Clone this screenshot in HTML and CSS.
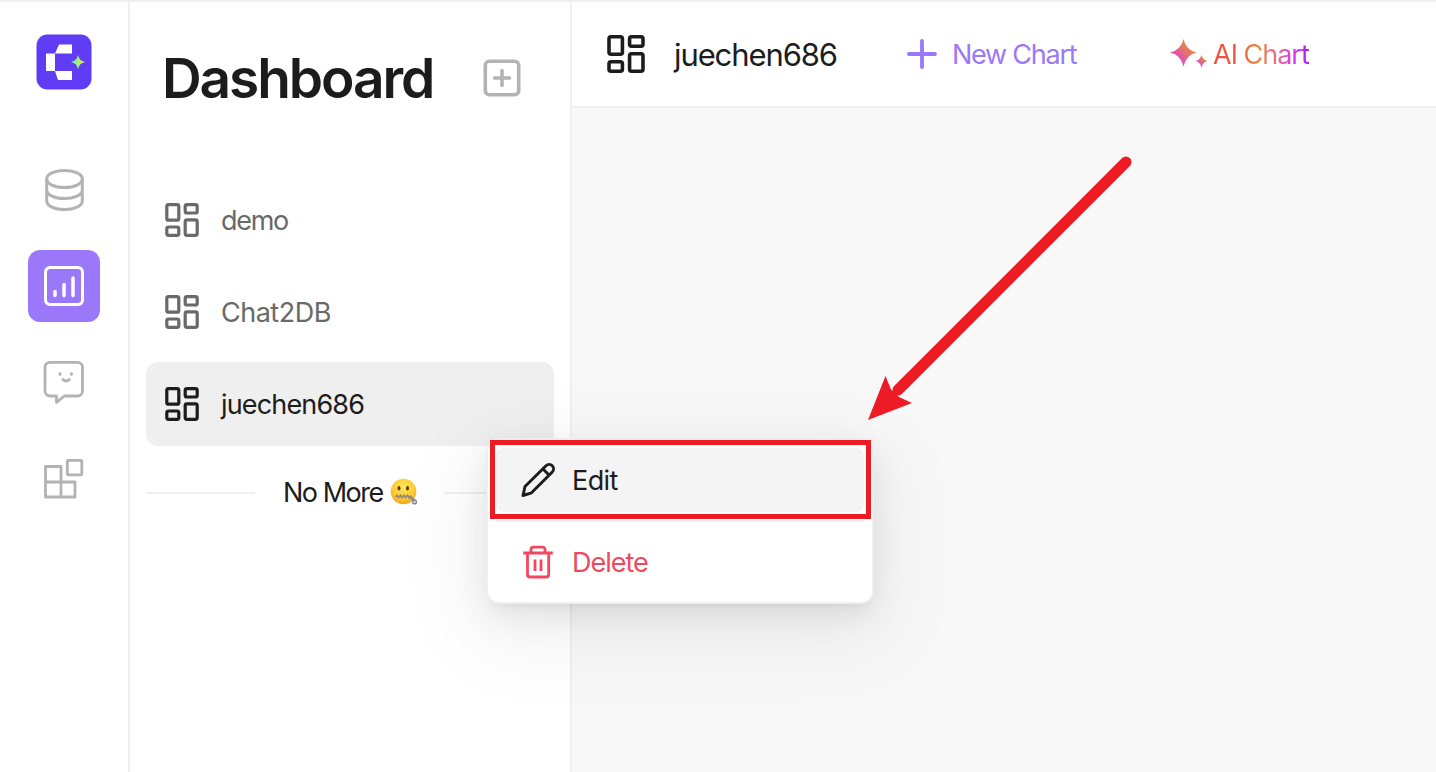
FILE: index.html
```html
<!DOCTYPE html>
<html lang="en">
<head>
<meta charset="utf-8">
<title>Dashboard</title>
<link rel="stylesheet" href="styles.css">
</head>
<body>
<svg class="defs" width="0" height="0">
  <defs>
    <symbol id="grid" viewBox="0 0 34 34">
      <g fill="none" stroke="currentColor" stroke-width="3.2">
        <rect x="1.8" y="1.6" width="12" height="15.6" rx="1.8"/>
        <rect x="20.2" y="1.6" width="12" height="8.4" rx="1.8"/>
        <rect x="1.8" y="24" width="12" height="8.4" rx="1.8"/>
        <rect x="20.2" y="16.8" width="12" height="15.6" rx="1.8"/>
      </g>
    </symbol>
    <linearGradient id="spark" x1="1" y1="0" x2="0" y2="1"><stop offset=".25" stop-color="#e8893c"/><stop offset=".7" stop-color="#dd4fbd"/></linearGradient>
    <linearGradient id="lime" x1="0" y1="0" x2="1" y2="0"><stop offset="0" stop-color="#5cf0c0"/><stop offset="1" stop-color="#f0e83a"/></linearGradient>
    <radialGradient id="face" cx=".5" cy=".35" r=".65"><stop offset="0" stop-color="#ffe65a"/><stop offset=".65" stop-color="#fecb35"/><stop offset="1" stop-color="#f3a01e"/></radialGradient>
  </defs>
</svg>
<div class="app">
  <nav class="rail">
    <svg class="logo" viewBox="0 0 56 56">
      <rect x=".5" y=".5" width="55" height="55" rx="11" fill="#613cf5"/>
      <path d="M10 19.500h9v17.500h-9zM23 10.500h13v9H19zM19 37h17v9H22z" fill="#fff"/>
      <path d="M42 21q1.300 5.800 7 7-5.700 1.200-7 7-1.300-5.800-7-7 5.700-1.200 7-7z" fill="url(#lime)"/>
    </svg>
    <div class="tools">
      <div class="tool"><svg width="44" height="48" viewBox="0 0 44 48" fill="none" stroke="#b3b3b3" stroke-width="3"><ellipse cx="22.500" cy="13" rx="17.800" ry="8.600"/><path d="M4.700 13v22c0 4.800 8 8.600 17.800 8.600s17.800-3.800 17.800-8.600V13M4.700 24c0 4.800 8 8.600 17.800 8.600s17.800-3.800 17.800-8.600"/></svg></div>
      <div class="tool active"><svg width="44" height="44" viewBox="0 0 44 44" fill="none" stroke="#fff" stroke-width="3" stroke-linecap="round"><rect x="3.500" y="3.500" width="37" height="37" rx="4.500"/><path d="M13 27.500v4M22 20.500v11M31 14v17.500" stroke-width="3.500"/></svg></div>
      <div class="tool"><svg width="44" height="48" viewBox="1 1 44 48" fill="none" stroke="#b3b3b3" stroke-width="2.800" stroke-linecap="round" stroke-linejoin="round"><path d="M9 5.300h27.500a5 5 0 0 1 5 5V34a5 5 0 0 1-5 5H23.500l-8 6.300V39H9a5 5 0 0 1-5-5V10.300a5 5 0 0 1 5-5z"/><path d="M19 16.600v1M30.500 16.600v1M22 22.400q3.200 3.200 6.400 0"/></svg></div>
      <div class="tool"><svg width="44" height="44" viewBox="2 0 44 44" fill="none" stroke="#b3b3b3" stroke-width="2.800" stroke-linejoin="round"><path d="M5.500 10.500h15.500v15.500h14v15H5.500zM5.500 26H21v15"/><rect x="27.300" y="4.300" width="14.500" height="14.500" rx=".8"/></svg></div>
    </div>
  </nav>
  <aside class="side">
    <div class="side-head">
      <h1 class="title">Dashboard</h1>
      <svg class="add" viewBox="0 0 38 38" fill="none" stroke="#b3b3b3" stroke-width="3.600" stroke-linecap="round"><rect x="2.300" y="2.300" width="33.400" height="33.400" rx="4"/><path d="M19 11.500v15M11.500 19h15"/></svg>
    </div>
    <div class="list">
      <div class="item"><svg class="glyph"><use href="#grid"/></svg><span class="t-demo">demo</span></div>
      <div class="item"><svg class="glyph"><use href="#grid"/></svg><span class="t-chat">Chat2DB</span></div>
      <div class="item selected"><svg class="glyph"><use href="#grid"/></svg><span class="t-jue">juechen686</span></div>
    </div>
    <div class="more">
      <span class="rule"></span>
      <span class="more-text">No More</span>
      <svg class="emoji" viewBox="0 0 28 28">
        <circle cx="13.500" cy="13.500" r="12.800" fill="url(#face)"/>
        <ellipse cx="9" cy="10.300" rx="1.500" ry="2.300" fill="#6a3b08"/><ellipse cx="17.500" cy="10.300" rx="1.500" ry="2.300" fill="#6a3b08"/>
        <path d="M5.500 18.300H21" stroke="#c9b27c" stroke-width="2.500"/>
        <path d="M5.500 19l1.500-2 1.500 3 2-3 1.500 3 2-3 1.500 3 2-3 1.500 3 2-2" fill="none" stroke="#85807a" stroke-width="1.100"/>
        <path d="M20.500 19l4 4" stroke="#8f8f8f" stroke-width="3"/><circle cx="24.500" cy="23.900" r="1.900" fill="#ddd" stroke="#858585" stroke-width="1.300"/>
      </svg>
      <span class="rule"></span>
    </div>
  </aside>
  <main class="main">
    <header class="bar">
      <svg class="bar-grid"><use href="#grid"/></svg>
      <span class="bar-name">juechen686</span>
      <svg class="plus" viewBox="0 0 30 30" stroke="#9b78fa" stroke-width="3.800" stroke-linecap="round"><path d="M15 2v26M2 15h26"/></svg>
      <span class="new">New Chart</span>
      <svg class="sparkles" viewBox="0 0 38 30" fill="url(#spark)"><path d="M13.500 0q2.500 11 13 13.500-10.500 2.500-13 14Q11 16 0 13.500 11 11 13.500 0z"/><path d="M31.500 16q1.300 5 6 6-4.700 1-6 6.500-1.300-5.500-6-6.500 4.700-1 6-6z"/></svg>
      <span class="ai">AI Chart</span>
    </header>
    <section class="canvas"></section>
  </main>
</div>
<div class="menu">
  <div class="option hover">
    <svg width="36" height="36" viewBox="0 0 36 36" fill="none" stroke="#1c1c1c" stroke-width="2.900" stroke-linejoin="round"><path d="M3 33.500l2-9L26 3.800a4.300 4.300 0 0 1 6.300 6.200L11.500 30.800zM23 7l6 6"/></svg>
    <span class="t-edit">Edit</span>
  </div>
  <div class="divider"></div>
  <div class="option danger">
    <svg width="36" height="36" viewBox="0 0 36 36" fill="none" stroke="#ef4960" stroke-width="2.800" stroke-linejoin="round"><path d="M3.300 9h29.500M7.500 9v21.500a2.500 2.500 0 0 0 2.500 2.500h16.200a2.500 2.500 0 0 0 2.500-2.500V9M11 9V5.500A2.300 2.300 0 0 1 13.300 3.200h9.400A2.300 2.300 0 0 1 25 5.500V9M15 15.500V27M21 15.500V27"/></svg>
    <span class="t-delete">Delete</span>
  </div>
</div>
<div class="highlight"></div>
<svg class="arrow" viewBox="0 0 280 280"><path d="M264 12L36 240" stroke="#ed1c24" stroke-width="11" stroke-linecap="round"/><path d="M6 270L23.500 226 29 239.500 37 247 50 253z" fill="#ed1c24"/></svg>
</body>
</html>
```
FILE: styles.css
```css
* { box-sizing: border-box; }
body { margin: 0; width: 1436px; height: 772px; overflow: hidden; font: 27px/36px Inter, sans-serif; color: #1c1c1c; background: #fff; }
svg { display: block; flex: none; }
span, h1 { white-space: nowrap; }
.defs { position: absolute; }
.app { display: flex; height: 772px; border-top: 2px solid #efefef; }
.rail { width: 130px; border-right: 2px solid #efefef; padding-top: 32px; }
.logo { width: 56px; height: 56px; margin-left: 36px; }
.tools { display: flex; flex-direction: column; gap: 24px; margin: 64px 0 0 28px; }
.tool { width: 72px; height: 72px; border-radius: 12px; display: flex; align-items: center; justify-content: center; }
.active { background: #9b78fa; }
.side { width: 442px; border-right: 2px solid #efefef; }
.side-head { display: flex; justify-content: space-between; align-items: center; height: 76px; margin: 38px 49px 0 32px; }
.title { margin: 0; font-size: 55px; line-height: 76px; font-weight: 600; letter-spacing: -2.1px; }
.add { width: 38px; height: 38px; }
.list { display: flex; flex-direction: column; gap: 8px; margin: 62px 16px 0; }
.item { display: flex; align-items: center; gap: 22px; height: 84px; padding-left: 19px; border-radius: 12px; color: #696969; }
.item span, .option span { padding-top: 1px; }
.selected { background: #efefef; color: #1c1c1c; }
.glyph { width: 34px; height: 34px; }
.more { display: flex; align-items: center; margin: 28px 16px 0; height: 38px; }
.rule { width: 109px; height: 2px; background: #efefef; }
.more-text { width: 107px; margin-left: 28px; letter-spacing: -1.5px; }
.emoji { width: 28px; height: 28px; margin: 0 27px 2px 0; }
.main { flex: 1; display: flex; flex-direction: column; }
.bar { height: 106px; display: flex; align-items: center; border-bottom: 2px solid #efefef; padding-left: 35px; }
.bar span { padding-top: 2px; }
.bar-grid { width: 38px; height: 38px; }
.bar-name { font-size: 31px; margin-left: 29px; width: 233px; letter-spacing: -1.1px; }
.plus { width: 30px; height: 30px; }
.new { color: #9b78fa; width: 218px; margin-left: 15px; letter-spacing: -1.25px; }
.sparkles { width: 38px; height: 30px; }
.ai { margin-left: 5px; letter-spacing: -1px; background: linear-gradient(90deg, #f0503f 0%, #ef5940 26%, #e98a42 48%, #e36b9a 68%, #d934ea 84%, #a41cf5 100%); background-clip: text; -webkit-background-clip: text; color: transparent; }
.canvas { flex: 1; background: #f8f8f8; }
.menu { position: absolute; left: 486px; top: 438px; width: 388px; height: 166px; padding: 8px; border: 2px solid #efefef; border-radius: 13px; background: #fff; box-shadow: 0 12px 32px rgba(0,0,0,.08), 0 6px 12px -8px rgba(0,0,0,.12), 0 24px 80px 18px rgba(0,0,0,.055); }
.option { display: flex; align-items: center; gap: 16px; height: 64px; padding-left: 24px; border-radius: 8px; }
.hover { background: #f4f4f4; }
.divider { height: 2px; background: #efefef; margin: 8px 0; }
.danger { color: #ef4960; }
.highlight { position: absolute; left: 490px; top: 440px; width: 381px; height: 79px; border: 5px solid #ed1c24; }
.arrow { position: absolute; left: 862px; top: 150px; width: 280px; height: 280px; }
.t-demo { letter-spacing: -1.3px; }
.t-chat { letter-spacing: -.5px; }
.t-jue { letter-spacing: -.85px; }
.t-edit { letter-spacing: -.6px; }
.t-delete { letter-spacing: -1px; }
```
